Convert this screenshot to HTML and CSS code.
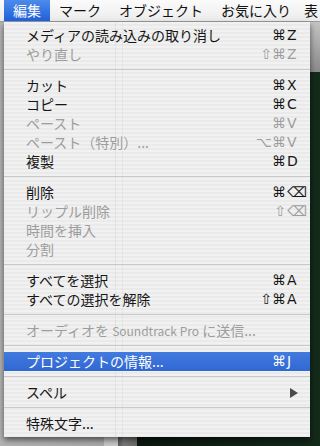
FILE: index.html
```html
<!DOCTYPE html>
<html lang="ja">
<head>
    <meta charset="UTF-8">
    <title>編集メニュー</title>
    <link rel="stylesheet" href="styles.css">
</head>
<body>
<div class="menubar">
    <span class="title active">編集</span>
    <span class="title">マーク</span>
    <span class="title">オブジェクト</span>
    <span class="title">お気に入り</span>
    <span class="title last">表</span>
</div>
<div class="menu">
    <div class="item"><span class="label">メディアの読み込みの取り消し</span><span class="mods">⌘</span><span class="key">Z</span></div>
    <div class="item off"><span class="label">やり直し</span><span class="mods">⇧⌘</span><span class="key">Z</span></div>
    <div class="sep"></div>
    <div class="item"><span class="label">カット</span><span class="mods">⌘</span><span class="key">X</span></div>
    <div class="item"><span class="label">コピー</span><span class="mods">⌘</span><span class="key">C</span></div>
    <div class="item off"><span class="label">ペースト</span><span class="mods">⌘</span><span class="key">V</span></div>
    <div class="item off"><span class="label">ペースト（特別）...</span><span class="mods">⌥⌘</span><span class="key">V</span></div>
    <div class="item"><span class="label">複製</span><span class="mods">⌘</span><span class="key">D</span></div>
    <div class="sep"></div>
    <div class="item"><span class="label">削除</span><span class="mods">⌘</span><span class="key">⌫</span></div>
    <div class="item off"><span class="label">リップル削除</span><span class="mods">⇧</span><span class="key">⌫</span></div>
    <div class="item off"><span class="label">時間を挿入</span></div>
    <div class="item off"><span class="label">分割</span></div>
    <div class="sep"></div>
    <div class="item"><span class="label">すべてを選択</span><span class="mods">⌘</span><span class="key">A</span></div>
    <div class="item"><span class="label">すべての選択を解除</span><span class="mods">⇧⌘</span><span class="key">A</span></div>
    <div class="sep"></div>
    <div class="item off"><span class="label">オーディオを <span class="latin">Soundtrack Pro</span> に送信...</span></div>
    <div class="sep"></div>
    <div class="item selected"><span class="label">プロジェクトの情報...</span><span class="mods">⌘</span><span class="key">J</span></div>
    <div class="sep"></div>
    <div class="item"><span class="label">スペル</span><span class="arrow"></span></div>
    <div class="sep"></div>
    <div class="item"><span class="label">特殊文字...</span></div>
</div>
</body>
</html>
```

FILE: styles.css
```css
* {
    margin: 0;
    padding: 0;
    box-sizing: border-box;
}

body {
    width: 320px;
    height: 446px;
    overflow: hidden;
    font-family: "Noto Sans CJK JP", "DejaVu Sans", sans-serif;
    font-size: 14px;
    background:
        linear-gradient(#c4c4c4, #8a8a8a) right 22px / 10px 50px no-repeat,
        linear-gradient(to right, #b4b4b4 0, #a9a9a9 104px, #c8c8c8 104px, #c8c8c8 118px, #5a5a5a 118px, #7a7a7a 124px, #6c6c6c 137px, #0c1710 137px, #132a1a 100%);
}

.menubar {
    height: 22px;
    display: flex;
    padding-left: 4px;
    background: linear-gradient(#fbfbfb, #ececec);
    border-bottom: 1px solid #9c9c9c;
    white-space: nowrap;
    overflow: hidden;
}

.title {
    padding: 0 9px;
    line-height: 21px;
    color: #111;
}

.title.last {
    padding: 0;
    margin-left: 4px;
}

.title.active {
    color: #fff;
    background: linear-gradient(#4d8ceb, #1f5fd9);
}

.menu {
    width: 306px;
    margin-left: 4px;
    padding: 4px 0;
    color: #161616;
    background:
        linear-gradient(to right, transparent 111px, rgba(0, 0, 0, 0.05) 111px, rgba(0, 0, 0, 0.05) 112px, transparent 112px, transparent 118px, rgba(0, 0, 0, 0.04) 118px, rgba(0, 0, 0, 0.04) 119px, transparent 119px),
        repeating-linear-gradient(#f1f1f1 0, #f1f1f1 2px, #eaeaea 2px, #eaeaea 4px);
    box-shadow: 0 3px 6px rgba(0, 0, 0, 0.55);
}

.item {
    height: 19px;
    display: flex;
    align-items: center;
    padding-left: 22px;
    line-height: 19px;
    white-space: nowrap;
}

.item.off {
    color: #9d9d9d;
}

.item.selected {
    color: #fff;
    background: linear-gradient(#437adf, #3068d2);
}

.label {
    flex: 1;
}

.latin {
    font-size: 12px;
}

.mods {
    font-family: "DejaVu Sans", sans-serif;
    text-align: right;
}

.key {
    width: 24px;
    padding-left: 1px;
    font-family: "DejaVu Sans", sans-serif;
}

.arrow {
    width: 0;
    height: 0;
    margin-right: 12px;
    border-left: 8px solid #4a4a4a;
    border-top: 5px solid transparent;
    border-bottom: 5px solid transparent;
}

.sep {
    height: 1px;
    margin: 5px 0 6px;
    background: #c9c9c9;
}
```
